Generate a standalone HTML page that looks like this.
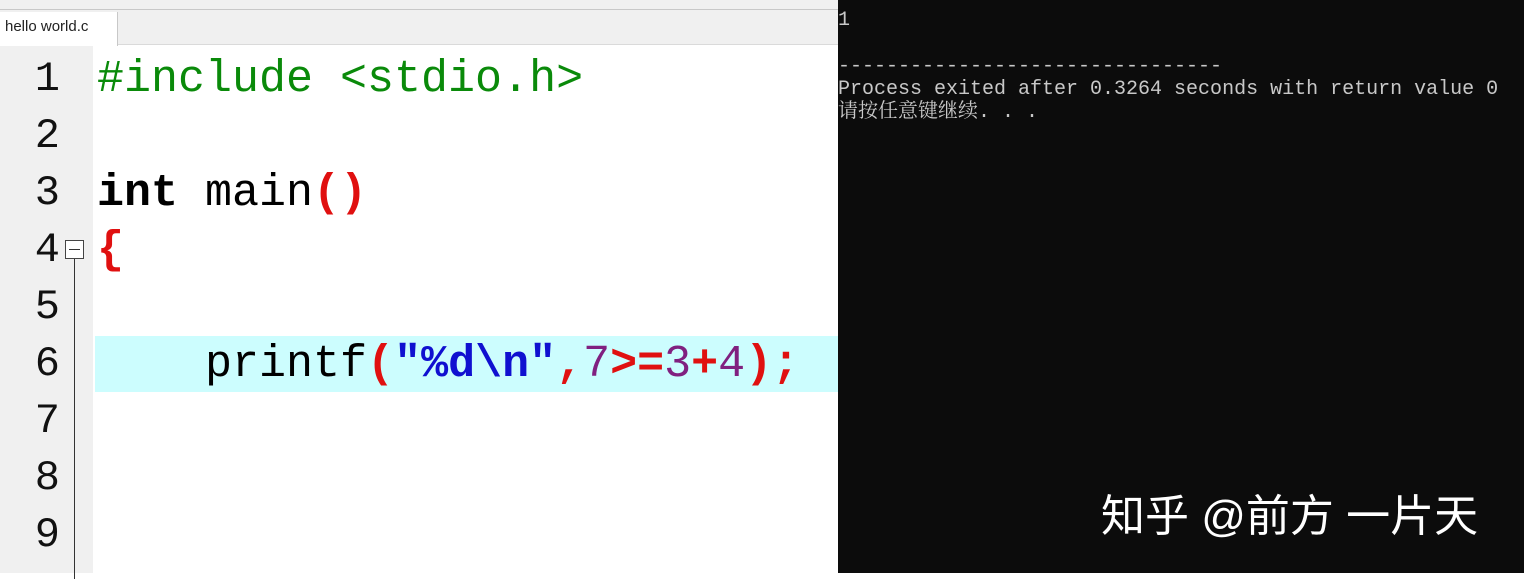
<!DOCTYPE html>
<html><head><meta charset="utf-8"><style>
*{margin:0;padding:0;box-sizing:border-box}
body{width:1524px;height:573px;overflow:hidden;background:#fff;position:relative;font-family:"Liberation Sans",sans-serif}
#top{position:absolute;left:0;top:0;width:838px;height:10px;background:#f0f0f0;border-bottom:1px solid #c8c8c8}
#tabbar{position:absolute;left:0;top:10px;width:838px;height:35px;background:#f0f0f0;border-bottom:1px solid #dadada}
#tab{position:absolute;left:0;top:2px;width:118px;height:34px;background:#fff;border-right:1px solid #c8c8c8;font-size:15px;line-height:30px;padding-left:5px;color:#222}
#gutter{position:absolute;left:0;top:46px;width:93px;height:527px;background:#f0f0f0}
.ln{position:absolute;left:0;width:60px;text-align:right;font-family:"Liberation Mono",monospace;font-size:42px;height:57px;line-height:57px;color:#111}
#fold{position:absolute;left:65px;top:240px;width:19px;height:19px;border:1px solid #444;background:#fff}
#fold:after{content:"";position:absolute;left:3px;top:8px;width:11px;height:1px;background:#333}
#vline{position:absolute;left:74px;top:259px;width:1px;height:320px;background:#333}
#hl{position:absolute;left:95px;top:336px;width:743px;height:56px;background:#ccfdfe}
.cl{position:absolute;left:97px;height:57px;line-height:57px;font-family:"Liberation Mono",monospace;font-size:45px;white-space:pre;color:#000}
.g{color:#0a8a0a}.r{color:#e01010;font-weight:bold}.b{color:#1010d0;font-weight:bold}.p{color:#802080}.k{font-weight:bold}
#con{position:absolute;left:838px;top:0;width:686px;height:573px;background:#0c0c0c;color:#c8c8c8;font-family:"Liberation Mono","Noto Serif CJK SC",monospace;font-size:20px;line-height:23px;white-space:pre;padding-top:9px}
#wm{position:absolute;left:1101px;top:480px;color:#fff;font-family:"Liberation Sans","Noto Sans CJK SC",sans-serif;font-size:44px;white-space:pre}
</style></head><body>
<div id="top"></div>
<div id="tabbar"><div id="tab">hello world.c</div></div>
<div id="gutter"></div>
<div class="ln" style="top:51px">1</div>
<div class="ln" style="top:108px">2</div>
<div class="ln" style="top:165px">3</div>
<div class="ln" style="top:222px">4</div>
<div class="ln" style="top:279px">5</div>
<div class="ln" style="top:336px">6</div>
<div class="ln" style="top:393px">7</div>
<div class="ln" style="top:450px">8</div>
<div class="ln" style="top:507px">9</div>
<div id="fold"></div><div id="vline"></div>
<div id="hl"></div>
<div class="cl g" style="top:51px">#include &lt;stdio.h&gt;</div>
<div class="cl" style="top:165px"><span class="k">int</span> main<span class="r">()</span></div>
<div class="cl r" style="top:222px">{</div>
<div class="cl" style="top:336px">    printf<span class="r">(</span><span class="b">"%d\n"</span><span class="r">,</span><span class="p">7</span><span class="r">&gt;=</span><span class="p">3</span><span class="r">+</span><span class="p">4</span><span class="r">);</span></div>
<div id="con">1

--------------------------------
Process exited after 0.3264 seconds with return value 0
请按任意键继续. . .</div>
<div id="wm">知乎 @前方 一片天</div>
</body></html>
